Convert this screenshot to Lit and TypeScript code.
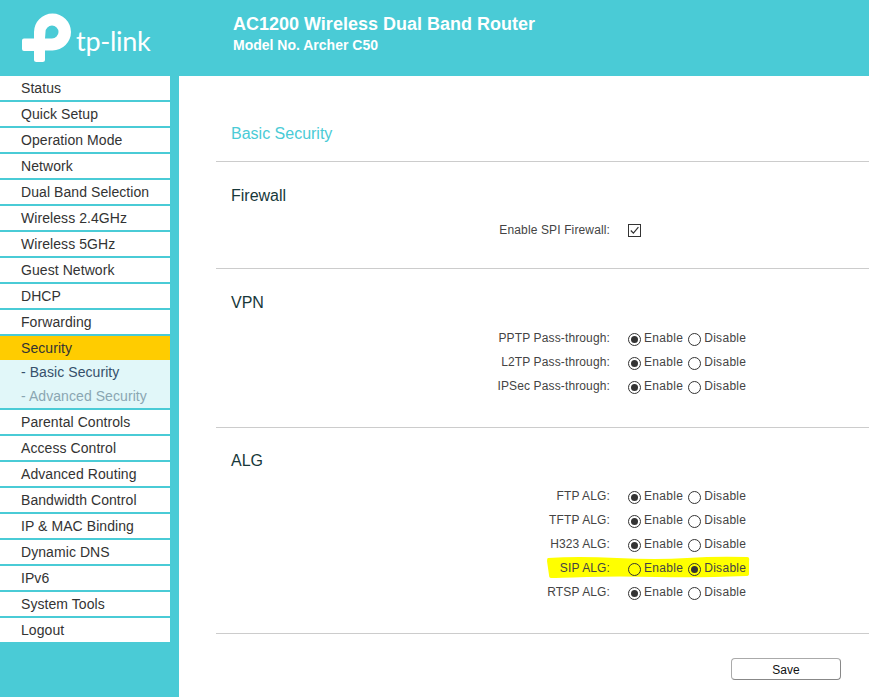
import { LitElement, html, css } from "lit";
import { customElement } from "lit/decorators.js";

const MENU: [string, string?][] = [
  ["Status"], ["Quick Setup"], ["Operation Mode"], ["Network"], ["Dual Band Selection"],
  ["Wireless 2.4GHz"], ["Wireless 5GHz"], ["Guest Network"], ["DHCP"], ["Forwarding"],
  ["Security", "active"], ["- Basic Security", "sub"], ["- Advanced Security", "sub dim"],
  ["Parental Controls"], ["Access Control"], ["Advanced Routing"], ["Bandwidth Control"],
  ["IP & MAC Binding"], ["Dynamic DNS"], ["IPv6"], ["System Tools"], ["Logout"],
];

@customElement("app-root")
export class AppRoot extends LitElement {
  static styles = css`
    :host { display: block; font-family: "Liberation Sans", Arial, sans-serif; background: #4acbd6; height: 697px; overflow: hidden; }
    .header { height: 76px; display: flex; color: #fff; }
    .logo { width: 233px; display: flex; }
    .logo svg { width: 76px; height: 76px; flex: none; }
    .logo span { font-family: Lato, "Open Sans", sans-serif; font-weight: 400; font-size: 27px; line-height: 76px; padding-top: 3px; letter-spacing: -0.3px; }
    .head-text { padding-top: 14px; font-weight: bold; }
    .head-text h1 { margin: 0; font-size: 18px; line-height: 21px; }
    .head-text p { margin: 0; font-size: 14px; line-height: 21px; }
    .body { display: flex; height: 621px; }
    .nav { width: 170px; flex: none; display: flex; flex-direction: column; gap: 2px; font-size: 14px; letter-spacing: 0.07px; }
    .item { height: 24px; line-height: 24px; background: #fff; color: #333; padding-left: 21px; }
    .item.active { background: #ffcc00; margin-bottom: -2px; }
    .item.sub { background: #e1f7f9; color: #35506b; margin-bottom: -2px; }
    .item.dim { color: #8aa6b2; margin-bottom: 0; }
    .main { margin-left: 9px; flex: 1; background: #fff; padding-left: 37px; color: #333; }
    .title { height: 86px; box-sizing: border-box; padding: 49px 0 0 15px; font-size: 16px; line-height: 18px; color: #4acbd6; border-bottom: 1px solid #ccc; }
    section { border-bottom: 1px solid #ccc; }
    h2 { margin: 0 0 0 15px; font-size: 16px; font-weight: normal; line-height: 18px; color: #17383a; }
    .s1 { padding: 25px 0 26px; }
    .s1 h2 { margin-bottom: 13px; }
    .s2 { padding: 25px 0 29px; }
    .s2 h2 { margin-bottom: 14px; }
    .s3 { padding: 24px 0 29px; }
    .s3 h2 { margin-bottom: 14px; }
    .row { height: 24px; display: flex; align-items: center; font-size: 12px; letter-spacing: 0.13px; color: #444; position: relative; }
    .row .lbl { width: 394px; text-align: right; flex: none; margin-right: 18px; position: relative; }
    .opt { display: flex; align-items: center; position: relative; margin-right: 5px; letter-spacing: 0.3px; }
    .radio { width: 11px; height: 11px; border: 1px solid #333; border-radius: 50%; margin-right: 3px; display: flex; align-items: center; justify-content: center; margin-top: 2px; }
    .radio.on::after { content: ""; width: 7px; height: 7px; border-radius: 50%; background: #333; }
    .check { width: 13px; height: 13px; display: block; }
    .mark { position: absolute; left: 331px; top: 0; width: 203px; height: 23px; z-index: 0; }
    .hl .lbl, .hl .opt { z-index: 1; }
    .save { display: block; margin: 24px 0 0 515px; width: 110px; height: 22px; border: 1px solid #aaa; border-bottom-color: #888; border-right-color: #888; border-radius: 4px; background: #fff; font: 12px "Liberation Sans", Arial, sans-serif; color: #111; padding: 1px 0 0; }
  `;

  private opt(on: boolean, label: string) {
    return html`<span class="opt"><span class="radio ${on ? "on" : ""}"></span>${label}</span>`;
  }

  private radio(label: string, enabled = true, hl = false) {
    return html`<div class="row ${hl ? "hl" : ""}">
      ${hl
        ? html`<svg class="mark" viewBox="0 0 203 23" preserveAspectRatio="none"><path fill="#ffff00" d="M1 2 Q30 0 70 2 T140 2 T200 1 Q203 1 202 5 L202 18 Q202 20 199 20 Q150 22 110 21 T40 21 T4 22 Q2 22 2 19 L0 5 Q0 2 1 2 Z"/></svg>`
        : ""}
      <span class="lbl">${label}</span>
      ${this.opt(enabled, "Enable")}${this.opt(!enabled, "Disable")}
    </div>`;
  }

  render() {
    return html`
      <div class="header">
        <div class="logo">
          <svg viewBox="0 0 76 76">
            <path fill="#fff" fill-rule="evenodd" d="M24 38.5 H34 V32 A18.5 18.5 0 1 1 52.5 50.5 H45 V59.5 a2.5 2.5 0 0 1 -2.5 2.5 H36.5 a2.5 2.5 0 0 1 -2.5 -2.5 V51 H24 a2 2 0 0 1 -2 -2 V40.5 a2 2 0 0 1 2 -2 Z M45 38.5 H52 A6.5 6.5 0 1 0 45.5 32 Z"/>
          </svg>
          <span>tp-link</span>
        </div>
        <div class="head-text">
          <h1>AC1200 Wireless Dual Band Router</h1>
          <p>Model No. Archer C50</p>
        </div>
      </div>
      <div class="body">
        <nav class="nav">
          ${MENU.map(([t, c]) => html`<div class="item ${c ?? ""}">${t}</div>`)}
        </nav>
        <div class="main">
          <div class="title">Basic Security</div>
          <section class="s1">
            <h2>Firewall</h2>
            <div class="row">
              <span class="lbl">Enable SPI Firewall:</span>
              <svg class="check" viewBox="0 0 13 13"><rect x=".5" y=".5" width="12" height="12" fill="#fff" stroke="#333"/><path d="M2.8 6.5 L5.4 9.2 L10.4 3.2" fill="none" stroke="#333" stroke-width="1.2"/></svg>
            </div>
          </section>
          <section class="s2">
            <h2>VPN</h2>
            ${this.radio("PPTP Pass-through:")}
            ${this.radio("L2TP Pass-through:")}
            ${this.radio("IPSec Pass-through:")}
          </section>
          <section class="s3">
            <h2>ALG</h2>
            ${this.radio("FTP ALG:")}
            ${this.radio("TFTP ALG:")}
            ${this.radio("H323 ALG:")}
            ${this.radio("SIP ALG:", false, true)}
            ${this.radio("RTSP ALG:")}
          </section>
          <button class="save">Save</button>
        </div>
      </div>
    `;
  }
}
